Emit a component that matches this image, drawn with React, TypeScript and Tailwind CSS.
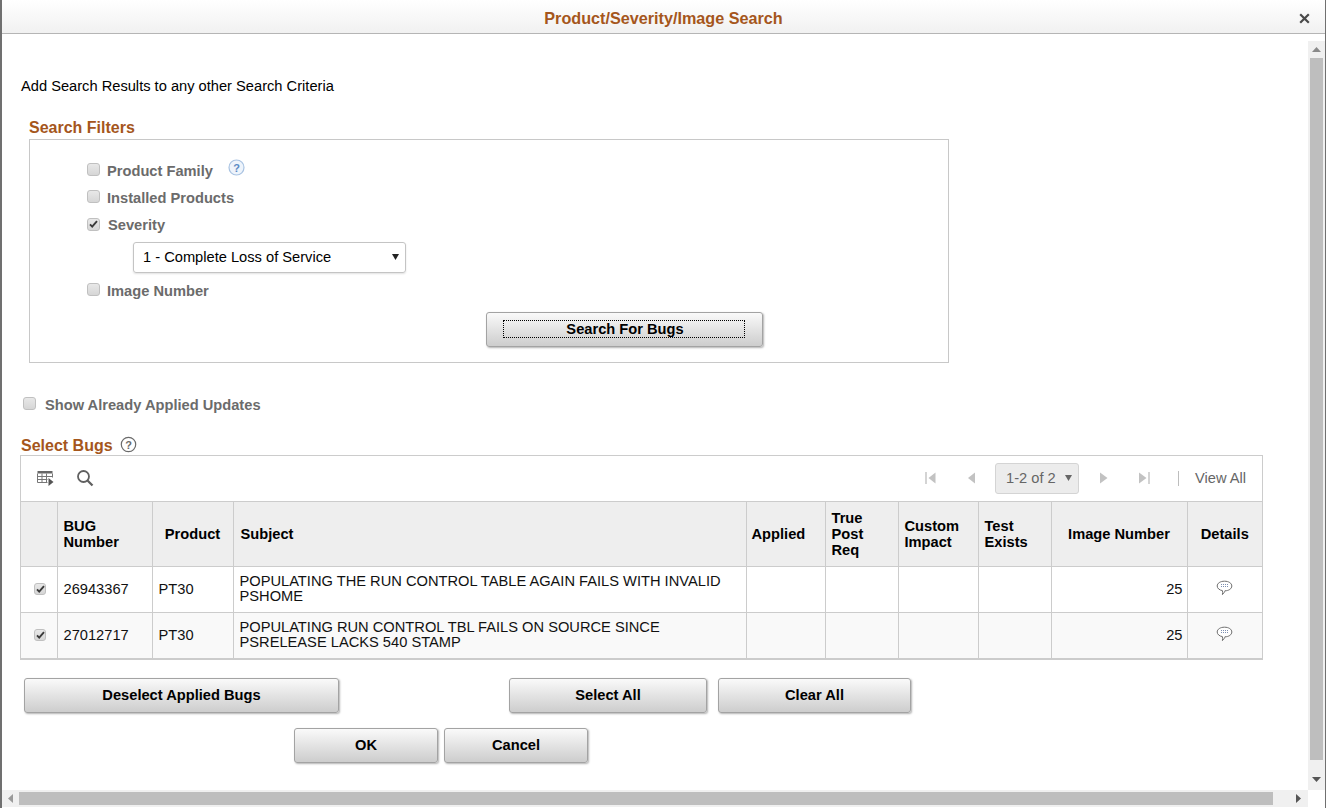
import React from "react";

function Check({ checked, small }: { checked?: boolean; small?: boolean }) {
  return (
    <span className={`flex shrink-0 items-center justify-center rounded-[3px] border border-[#c0c0c0] bg-gradient-to-b from-[#e8e8e8] to-[#d6d6d6] ${small ? "h-[12px] w-[12px]" : "h-[13px] w-[13px]"}`}>
      {checked && (
        <svg width="9" height="8" viewBox="0 0 9 8" className="block">
          <path d="M1 4.4 L3.2 6.6 L8 1.2" fill="none" stroke="#3a3a3a" strokeWidth="1.9" />
        </svg>
      )}
    </span>
  );
}

function Btn({ children, className = "" }: { children: React.ReactNode; className?: string }) {
  return (
    <button className={`flex h-[35px] items-center justify-center rounded-[3px] border border-[#a3a3a3] bg-gradient-to-b from-[#fafafa] to-[#cdcdcd] text-[14.67px] font-bold text-black shadow-[1px_1px_2px_rgba(0,0,0,0.3)] ${className}`}>
      {children}
    </button>
  );
}

function FilterRow({ label, checked, h, x = "ml-[7px]", cb = "mb-[3px]" }: { label: string; checked?: boolean; h: string; x?: string; cb?: string }) {
  return (
    <div className={`flex items-center ${h}`}>
      <span className={cb}><Check checked={checked} /></span>
      <span className={`${x} text-[14.67px] font-bold text-[#6b6b6b]`}>{label}</span>
    </div>
  );
}

function Bubble() {
  return (
    <svg width="17" height="16" viewBox="0 0 17 16" className="mx-auto block">
      <path d="M8.5 1.2 C12.7 1.2 15.8 3.2 15.8 6 C15.8 8.8 12.7 10.8 8.9 10.8 C8.7 12 7.6 13.6 6.4 14.6 C6.8 13.2 6.8 11.6 6.4 10.6 C3.6 10.2 1.2 8.4 1.2 6 C1.2 3.2 4.3 1.2 8.5 1.2 Z" fill="#fff" stroke="#6f6f6f" strokeWidth="1" />
      <g fill="#7d8fb0">
        <rect x="5" y="4" width="1" height="1" /><rect x="7" y="4" width="1" height="1" /><rect x="9" y="4" width="1" height="1" /><rect x="11" y="4" width="1" height="1" />
        <rect x="5" y="6" width="1" height="1" /><rect x="7" y="6" width="1" height="1" /><rect x="9" y="6" width="1" height="1" /><rect x="11" y="6" width="1" height="1" />
      </g>
    </svg>
  );
}

const th = "border-r border-b border-[#ccc] bg-[#eeeeee] pt-[1px] text-[14.67px] font-bold leading-[16px] text-black align-middle";
const td = "border-r border-b border-[#ccc] text-[14.67px] leading-[15px] text-[#111] align-middle";

const rows = [
  { no: "26943367", subject: ["POPULATING THE RUN CONTROL TABLE AGAIN FAILS WITH INVALID", "PSHOME"], bg: "bg-white" },
  { no: "27012717", subject: ["POPULATING RUN CONTROL TBL FAILS ON SOURCE SINCE", "PSRELEASE LACKS 540 STAMP"], bg: "bg-[#f9f9f9]" },
];

export default function App() {
  return (
    <div className="flex h-[808px] w-[1326px] flex-col overflow-hidden border-l-2 border-r border-l-[#707070] border-r-[#707070] bg-white font-['Liberation_Sans',Arial,sans-serif] text-black">
      <div className="relative flex h-[34px] shrink-0 items-center justify-center border-b border-[#b5b5b5] bg-gradient-to-b from-white to-[#f1f1f1] pt-[4px]">
        <span className="text-[16.2px] font-bold text-[#a5561c]">Product/Severity/Image Search</span>
        <svg width="11" height="11" viewBox="0 0 11 11" className="absolute right-[15px] top-[13px]">
          <path d="M1.2 1.2 L9.8 9.8 M9.8 1.2 L1.2 9.8" stroke="#4a4a4a" strokeWidth="2.2" />
        </svg>
      </div>

      <div className="flex min-h-0 flex-1">
        <div className="w-[1306px] min-w-0 pt-[44px]">
          <div className="ml-[19px] text-[14.67px] leading-[16px]">Add Search Results to any other Search Criteria</div>

          <div className="ml-[27px] mt-[26px] text-[16px] font-bold leading-[16px] text-[#a5561c]">Search Filters</div>
          <div className="ml-[27px] mt-[3px] flex h-[224px] w-[920px] flex-col border border-[#c8c8c8] pl-[57px] pt-[17px]">
            <div className="flex items-start">
              <FilterRow label="Product Family" h="h-[27px]" cb="mb-[2px]" />
              <svg width="17" height="17" viewBox="0 0 17 17" className="ml-[15px] mt-[2px]">
                <circle cx="8.5" cy="8.5" r="7.5" fill="#eef4fb" stroke="#a9c3e2" strokeWidth="1.2" />
                <text x="8.5" y="12.5" textAnchor="middle" fontSize="11" fontWeight="700" fill="#5c8ac4" fontFamily="Liberation Sans">?</text>
              </svg>
            </div>
            <FilterRow label="Installed Products" h="h-[27px]" cb="mb-[2px]" />
            <FilterRow label="Severity" checked h="h-[27px]" x="ml-[8px]" cb="mb-[1px]" />
            <div className="ml-[46px] mt-[4px] flex h-[31px] w-[273px] items-center justify-between rounded-[3px] border border-[#c4c4c4] pb-[2px] pl-[9px] pr-[6px] text-[14.67px] shadow-[0_1px_2px_rgba(0,0,0,0.12)]">
              <span>1 - Complete Loss of Service</span>
              <svg width="7" height="6" viewBox="0 0 7 6"><path d="M0 0 H7 L3.5 6 Z" fill="#222" /></svg>
            </div>
            <div className="mt-[4px]"><FilterRow label="Image Number" h="h-[28px]" /></div>
            <div className="mt-[7px] pl-[399px]">
              <Btn className="w-[277px]">
                <span className="mb-[2px] mr-[2px] flex h-[18px] w-[242px] items-center justify-center border border-dotted border-black pl-[3px]">Search For Bugs</span>
              </Btn>
            </div>
          </div>

          <div className="ml-[21px] mt-[27px] flex h-[30px] items-center">
            <span className="mb-[3px]"><Check /></span>
            <span className="ml-[9px] text-[14.67px] font-bold text-[#6b6b6b]">Show Already Applied Updates</span>
          </div>

          <div className="ml-[19px] mt-[17px] flex h-[17px] items-center">
            <span className="text-[16px] font-bold text-[#a5561c]">Select Bugs</span>
            <svg width="17" height="17" viewBox="0 0 17 17" className="ml-[7px] mb-[3px]">
              <circle cx="8.5" cy="8.5" r="7.2" fill="none" stroke="#6a6a6a" strokeWidth="1.2" />
              <text x="8.5" y="12.5" textAnchor="middle" fontSize="11" fontWeight="700" fill="#6a6a6a" fontFamily="Liberation Sans">?</text>
            </svg>
          </div>

          <div className="ml-[18px] mt-[1px] w-[1243px] border border-[#ccc]">
            <div className="flex h-[46px] items-center border-b border-[#ccc] pb-[1px]">
              <svg width="17" height="17" viewBox="0 0 17 17" className="ml-[16px]">
                <path d="M0.5 1 H15.5 V3.5 H0.5 Z" fill="#666" />
                <path d="M0.5 3.5 V12.5 H10.5 M5 3.5 V12.5 M9.5 3.5 V12.5 M0.5 6.5 H15.5 M0.5 9.5 H10.5 M15.5 3.5 V7.5" fill="none" stroke="#777" strokeWidth="1" />
                <path d="M11.5 8 L16.5 12 L11.5 16 Z" fill="#555" />
              </svg>
              <svg width="18" height="18" viewBox="0 0 18 18" className="ml-[22px]">
                <circle cx="7.5" cy="7.5" r="5.5" fill="none" stroke="#606060" strokeWidth="1.8" />
                <path d="M11.5 11.5 L16.5 16.5" stroke="#606060" strokeWidth="2.3" />
              </svg>
              <div className="ml-auto flex items-center pr-[15px]">
                <svg width="11" height="14" viewBox="0 0 11 14" className="mr-[31px]"><path d="M1 1 V13" stroke="#c2c2c2" strokeWidth="1.4" /><path d="M10.5 1.5 V12.5 L3.5 7 Z" fill="#c2c2c2" /></svg>
                <svg width="8" height="14" viewBox="0 0 8 14" className="mr-[20px]"><path d="M8 1.5 V12.5 L1 7 Z" fill="#c2c2c2" /></svg>
                <div className="mr-[21px] flex h-[31px] w-[84px] items-center justify-between rounded-[3px] border border-[#d4d4d4] bg-[#ececec] pl-[10px] pr-[6px] text-[14.67px] text-[#666]">
                  <span>1-2 of 2</span>
                  <svg width="7" height="6" viewBox="0 0 7 6"><path d="M0 0 H7 L3.5 6 Z" fill="#666" /></svg>
                </div>
                <svg width="8" height="14" viewBox="0 0 8 14" className="mr-[31px]"><path d="M0 1.5 V12.5 L7.5 7 Z" fill="#c2c2c2" /></svg>
                <svg width="11" height="14" viewBox="0 0 11 14" className="mr-[28px]"><path d="M0 1.5 V12.5 L7.5 7 Z" fill="#c2c2c2" /><path d="M10 1 V13" stroke="#c2c2c2" strokeWidth="1.4" /></svg>
                <span className="mr-[16px] h-[15px] w-px bg-[#bdbdbd]" />
                <span className="w-[52px] text-[14.67px] text-[#666]">View All</span>
              </div>
            </div>
            <table className="w-[1241px] table-fixed border-collapse">
              <colgroup>
                <col className="w-[36px]" /><col className="w-[95px]" /><col className="w-[81px]" /><col className="w-[513px]" />
                <col className="w-[79px]" /><col className="w-[73px]" /><col className="w-[80px]" /><col className="w-[73px]" />
                <col className="w-[136px]" /><col className="w-[75px]" />
              </colgroup>
              <thead>
                <tr className="h-[64px]">
                  <th className={th} />
                  <th className={`${th} pl-[6px] text-left`}>BUG<br />Number</th>
                  <th className={`${th} text-center`}>Product</th>
                  <th className={`${th} pl-[7px] text-left`}>Subject</th>
                  <th className={`${th} pl-[5px] text-left`}>Applied</th>
                  <th className={`${th} pl-[6px] text-left`}>True<br />Post<br />Req</th>
                  <th className={`${th} pl-[6px] text-left`}>Custom<br />Impact</th>
                  <th className={`${th} pl-[6px] text-left`}>Test<br />Exists</th>
                  <th className={`${th} text-center`}>Image Number</th>
                  <th className={`${th} border-r-0 text-center`}>Details</th>
                </tr>
              </thead>
              <tbody>
                {rows.map((r) => (
                  <tr key={r.no} className={`h-[46px] ${r.bg}`}>
                    <td className={td}><span className="flex justify-center pl-[3px]"><Check checked small /></span></td>
                    <td className={`${td} pl-[6px]`}>{r.no}</td>
                    <td className={`${td} pl-[6px]`}>PT30</td>
                    <td className={`${td} pl-[6px]`}>{r.subject[0]}<br />{r.subject[1]}</td>
                    <td className={td} /><td className={td} /><td className={td} /><td className={td} />
                    <td className={`${td} pr-[4px] text-right`}>25</td>
                    <td className={`${td} border-r-0`}><span className="mb-[2px] block"><Bubble /></span></td>
                  </tr>
                ))}
              </tbody>
            </table>
          </div>

          <div className="mt-[18px] flex pl-[22px]">
            <Btn className="w-[315px]">Deselect Applied Bugs</Btn>
            <Btn className="ml-[170px] w-[198px]">Select All</Btn>
            <Btn className="ml-[11px] w-[193px]">Clear All</Btn>
          </div>
          <div className="mt-[15px] flex pl-[292px]">
            <Btn className="w-[144px]">OK</Btn>
            <Btn className="ml-[6px] w-[144px]">Cancel</Btn>
          </div>
        </div>

        <div className="mt-[7px] flex w-[17px] shrink-0 flex-col items-center bg-[#f0f0f0]">
          <svg width="9" height="5" viewBox="0 0 9 5" className="mt-[6px]"><path d="M0 5 L4.5 0 L9 5 Z" fill="#8a8a8a" /></svg>
          <div className="mt-[6px] h-[702px] w-[13px] bg-[#bebebe]" />
          <svg width="9" height="5" viewBox="0 0 9 5" className="mt-[17px]"><path d="M0 0 L4.5 5 L9 0 Z" fill="#555" /></svg>
        </div>
      </div>

      <div className="mb-[1px] mr-[17px] flex h-[17px] shrink-0 items-center bg-[#f0f0f0]">
        <svg width="5" height="9" viewBox="0 0 5 9" className="ml-[6px]"><path d="M5 0 L0 4.5 L5 9 Z" fill="#9a9a9a" /></svg>
        <div className="ml-[6px] h-[13px] w-[1254px] bg-[#bebebe]" />
        <svg width="5" height="9" viewBox="0 0 5 9" className="ml-[23px]"><path d="M0 0 L5 4.5 L0 9 Z" fill="#555" /></svg>
      </div>
    </div>
  );
}
